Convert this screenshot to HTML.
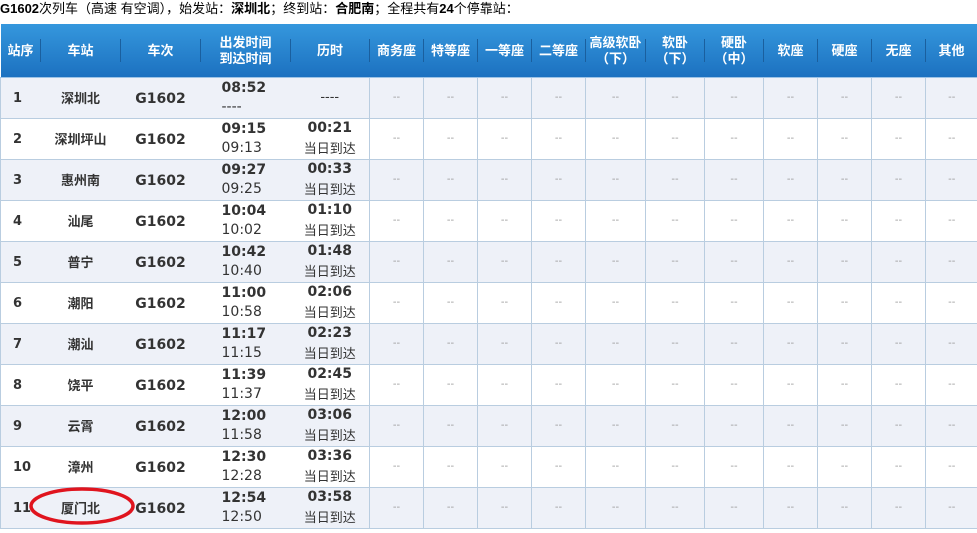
<!DOCTYPE html>
<html><head><meta charset="utf-8"><style>
*{margin:0;padding:0;box-sizing:border-box}
body{width:977px;height:533px;overflow:hidden;background:#fff;font-family:"DejaVu Sans","Noto Sans CJK SC",sans-serif;color:#333;position:relative}
.title{position:absolute;left:0;top:0;height:18px;font-size:13px;line-height:17px;color:#000;white-space:nowrap;font-family:"Liberation Sans","Noto Sans CJK SC",sans-serif}
table{position:absolute;left:0;top:24px;border-collapse:collapse;table-layout:fixed;width:977px}
th{height:53px;color:#fff;font-size:13px;font-weight:bold;line-height:16px;text-align:center;background:linear-gradient(#3597dd,#1c71c0);position:relative;border-bottom:1px solid #9cc3e6;font-family:"Noto Sans CJK SC",sans-serif}
th:after{content:"";position:absolute;right:0;top:15px;height:23px;width:1px;background:#1a5f9e}
th:last-child:after{display:none}
td{height:41px;border-bottom:1px solid #b9cde0;text-align:center;font-size:13px;vertical-align:middle;line-height:16px}
tr:nth-child(even) td{background:#eef1f8}
td.s{border-left:1px solid #b9cde0;color:#999;font-size:10px}
td.n{text-align:left;padding-left:12px;font-weight:bold;padding-top:3px}
td.st{font-weight:bold;font-family:"Noto Sans CJK SC",sans-serif;padding-top:1px}
td.c{font-weight:bold;font-size:14px;padding-top:2px}
td.t{text-align:left;padding-left:21px;line-height:19px;font-size:14px}
td.t b{display:block}
td.d{line-height:19px;font-size:13px}
td.d b{display:block;font-size:14px}
td.d span{font-family:"Noto Sans CJK SC",sans-serif}
td:first-child{border-left:1px solid #b9cde0}
</style></head><body>
<div class="title"><b>G1602</b>次列车（高速 有空调），始发站：<b>深圳北</b>；终到站：<b>合肥南</b>；全程共有<b>24</b>个停靠站：</div>
<table>
<colgroup><col style="width:40px"><col style="width:80px"><col style="width:80px"><col style="width:90px"><col style="width:79px"><col style="width:54px"><col style="width:54px"><col style="width:54px"><col style="width:54px"><col style="width:60px"><col style="width:59px"><col style="width:59px"><col style="width:54px"><col style="width:54px"><col style="width:54px"><col style="width:52px"></colgroup>
<tr><th>站序</th><th>车站</th><th>车次</th><th>出发时间<br>到达时间</th><th>历时</th><th>商务座</th><th>特等座</th><th>一等座</th><th>二等座</th><th>高级软卧<br>（下）</th><th>软卧<br>（下）</th><th>硬卧<br>（中）</th><th>软座</th><th>硬座</th><th>无座</th><th>其他</th></tr>
<tr><td class="n">1</td><td class="st">深圳北</td><td class="c">G1602</td><td class="t"><b>08:52</b>----</td><td class="d">----</td><td class="s">--</td><td class="s">--</td><td class="s">--</td><td class="s">--</td><td class="s">--</td><td class="s">--</td><td class="s">--</td><td class="s">--</td><td class="s">--</td><td class="s">--</td><td class="s">--</td></tr>
<tr><td class="n">2</td><td class="st">深圳坪山</td><td class="c">G1602</td><td class="t"><b>09:15</b>09:13</td><td class="d"><b>00:21</b><span>当日到达</span></td><td class="s">--</td><td class="s">--</td><td class="s">--</td><td class="s">--</td><td class="s">--</td><td class="s">--</td><td class="s">--</td><td class="s">--</td><td class="s">--</td><td class="s">--</td><td class="s">--</td></tr>
<tr><td class="n">3</td><td class="st">惠州南</td><td class="c">G1602</td><td class="t"><b>09:27</b>09:25</td><td class="d"><b>00:33</b><span>当日到达</span></td><td class="s">--</td><td class="s">--</td><td class="s">--</td><td class="s">--</td><td class="s">--</td><td class="s">--</td><td class="s">--</td><td class="s">--</td><td class="s">--</td><td class="s">--</td><td class="s">--</td></tr>
<tr><td class="n">4</td><td class="st">汕尾</td><td class="c">G1602</td><td class="t"><b>10:04</b>10:02</td><td class="d"><b>01:10</b><span>当日到达</span></td><td class="s">--</td><td class="s">--</td><td class="s">--</td><td class="s">--</td><td class="s">--</td><td class="s">--</td><td class="s">--</td><td class="s">--</td><td class="s">--</td><td class="s">--</td><td class="s">--</td></tr>
<tr><td class="n">5</td><td class="st">普宁</td><td class="c">G1602</td><td class="t"><b>10:42</b>10:40</td><td class="d"><b>01:48</b><span>当日到达</span></td><td class="s">--</td><td class="s">--</td><td class="s">--</td><td class="s">--</td><td class="s">--</td><td class="s">--</td><td class="s">--</td><td class="s">--</td><td class="s">--</td><td class="s">--</td><td class="s">--</td></tr>
<tr><td class="n">6</td><td class="st">潮阳</td><td class="c">G1602</td><td class="t"><b>11:00</b>10:58</td><td class="d"><b>02:06</b><span>当日到达</span></td><td class="s">--</td><td class="s">--</td><td class="s">--</td><td class="s">--</td><td class="s">--</td><td class="s">--</td><td class="s">--</td><td class="s">--</td><td class="s">--</td><td class="s">--</td><td class="s">--</td></tr>
<tr><td class="n">7</td><td class="st">潮汕</td><td class="c">G1602</td><td class="t"><b>11:17</b>11:15</td><td class="d"><b>02:23</b><span>当日到达</span></td><td class="s">--</td><td class="s">--</td><td class="s">--</td><td class="s">--</td><td class="s">--</td><td class="s">--</td><td class="s">--</td><td class="s">--</td><td class="s">--</td><td class="s">--</td><td class="s">--</td></tr>
<tr><td class="n">8</td><td class="st">饶平</td><td class="c">G1602</td><td class="t"><b>11:39</b>11:37</td><td class="d"><b>02:45</b><span>当日到达</span></td><td class="s">--</td><td class="s">--</td><td class="s">--</td><td class="s">--</td><td class="s">--</td><td class="s">--</td><td class="s">--</td><td class="s">--</td><td class="s">--</td><td class="s">--</td><td class="s">--</td></tr>
<tr><td class="n">9</td><td class="st">云霄</td><td class="c">G1602</td><td class="t"><b>12:00</b>11:58</td><td class="d"><b>03:06</b><span>当日到达</span></td><td class="s">--</td><td class="s">--</td><td class="s">--</td><td class="s">--</td><td class="s">--</td><td class="s">--</td><td class="s">--</td><td class="s">--</td><td class="s">--</td><td class="s">--</td><td class="s">--</td></tr>
<tr><td class="n">10</td><td class="st">漳州</td><td class="c">G1602</td><td class="t"><b>12:30</b>12:28</td><td class="d"><b>03:36</b><span>当日到达</span></td><td class="s">--</td><td class="s">--</td><td class="s">--</td><td class="s">--</td><td class="s">--</td><td class="s">--</td><td class="s">--</td><td class="s">--</td><td class="s">--</td><td class="s">--</td><td class="s">--</td></tr>
<tr><td class="n">11</td><td class="st">厦门北</td><td class="c">G1602</td><td class="t"><b>12:54</b>12:50</td><td class="d"><b>03:58</b><span>当日到达</span></td><td class="s">--</td><td class="s">--</td><td class="s">--</td><td class="s">--</td><td class="s">--</td><td class="s">--</td><td class="s">--</td><td class="s">--</td><td class="s">--</td><td class="s">--</td><td class="s">--</td></tr>
</table>
<svg style="position:absolute;left:0;top:0" width="977" height="533"><ellipse cx="82" cy="506" rx="51" ry="17" fill="none" stroke="#e0141e" stroke-width="3.5"/></svg>
</body></html>
